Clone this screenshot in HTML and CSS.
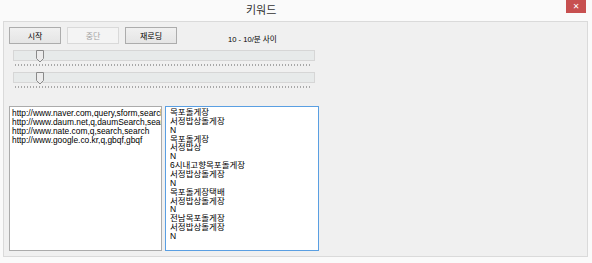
FILE: index.html
```html
<!DOCTYPE html>
<html lang="ko">
<head>
    <meta charset="UTF-8">
    <title>키워드</title>
    <link rel="stylesheet" href="styles.css">
</head>
<body>
    <div class="window">
        <div class="titlebar">
            <span class="title">키워드</span>
            <span class="close">&#x2715;</span>
        </div>
        <div class="panel">
            <div class="toolbar">
                <button class="btn">시작</button>
                <button class="btn" disabled>중단</button>
                <button class="btn">재로딩</button>
                <span class="range">10 - 10/분 사이</span>
            </div>

            <div class="slider first">
                <div class="track">
                    <svg class="thumb" width="8" height="13" viewBox="0 0 8 13"><path d="M0.5 0.5 H7.5 V8.5 L4 12 L0.5 8.5 Z" fill="#ececec" stroke="#8a8a8a"/></svg>
                </div>
                <div class="ticks"></div>
            </div>
            <div class="slider">
                <div class="track">
                    <svg class="thumb" width="8" height="13" viewBox="0 0 8 13"><path d="M0.5 0.5 H7.5 V8.5 L4 12 L0.5 8.5 Z" fill="#ececec" stroke="#8a8a8a"/></svg>
                </div>
                <div class="ticks"></div>
            </div>

            <div class="lists">
                <ul class="listbox urls">
                    <li>http://www.naver.com,query,sform,search</li>
                    <li>http://www.daum.net,q,daumSearch,search</li>
                    <li>http://www.nate.com,q,search,search</li>
                    <li>http://www.google.co.kr,q,gbqf,gbqf</li>
                </ul>
                <ul class="listbox words focused">
                    <li>목포돌게장</li>
                    <li>서정밥상돌게장</li>
                    <li>N</li>
                    <li>목포돌게장</li>
                    <li>서정밥상</li>
                    <li>N</li>
                    <li>6시내고향목포돌게장</li>
                    <li>서정밥상돌게장</li>
                    <li>N</li>
                    <li>목포돌게장택배</li>
                    <li>서정밥상돌게장</li>
                    <li>N</li>
                    <li>전남목포돌게장</li>
                    <li>서정밥상돌게장</li>
                    <li>N</li>
                </ul>
            </div>
        </div>
    </div>
</body>
</html>
```

FILE: styles.css
```css
body {
    margin: 0;
    padding: 0;
    background-color: #fafafa;
    font-family: "Liberation Sans", "Noto Sans CJK KR", sans-serif;
    color: #000;
}
.window {
    width: 592px;
    height: 263px;
    overflow: hidden;
}
.titlebar {
    height: 21px;
    display: flex;
    align-items: flex-start;
}
.title {
    margin-left: 246px;
    margin-top: 3px;
    font-family: "Noto Sans CJK KR", sans-serif;
    font-size: 11px;
    line-height: 12px;
    color: #333;
}
.close {
    margin-left: auto;
    margin-right: 6px;
    width: 20px;
    height: 13px;
    background: #c75050;
    color: #fff;
    font-size: 8px;
    line-height: 13px;
    text-align: center;
    font-family: "DejaVu Sans", sans-serif;
}
.panel {
    margin-left: 3px;
    width: 585px;
    height: 236px;
    border: 1px solid #dadada;
    background: #f0f0f0;
    padding: 5px 0 0 5px;
    box-sizing: border-box;
    display: flex;
    flex-direction: column;
}
.toolbar {
    display: flex;
    align-items: flex-start;
    gap: 6px;
    height: 17px;
}
.btn {
    width: 52px;
    height: 17px;
    padding: 0;
    border: 1px solid #acacac;
    background: linear-gradient(#f0f0f0, #e5e5e5);
    font-family: "Noto Sans CJK KR", sans-serif;
    font-size: 8px;
    line-height: 15px;
    color: #000;
}
.btn:disabled {
    border-color: #d9d9d9;
    background: #f4f4f4;
    color: #a3a3a3;
}
.range {
    margin-left: 45px;
    margin-top: 8px;
    font-family: "Liberation Sans", "Noto Sans CJK KR", sans-serif;
    font-size: 7.6px;
    line-height: 10px;
}
.slider {
    margin-left: 4px;
    width: 302px;
}
.slider.first {
    margin-top: 6px;
}
.slider + .slider {
    margin-top: 6px;
}
.track {
    position: relative;
    height: 11px;
    border: 1px solid #d6d6d6;
    background: #e7eaea;
    box-sizing: border-box;
}
.thumb {
    position: absolute;
    left: 22px;
    top: -1px;
    display: block;
}
.ticks {
    margin: 3px 3px 0 2px;
    height: 2px;
    background: repeating-linear-gradient(90deg, #a8a8a8 0 1px, transparent 1px 3px);
}
.lists {
    display: flex;
    gap: 3px;
    margin-top: 18px;
}
.listbox {
    list-style: none;
    margin: 0;
    height: 145px;
    background: #fff;
    border: 1px solid #ababab;
    box-sizing: border-box;
    overflow: hidden;
}
.urls {
    width: 153px;
    padding: 2px 1px 0 2px;
    font-size: 8.4px;
    line-height: 9px;
}
.urls li {
    white-space: nowrap;
}
.words {
    width: 154px;
    padding: 1px 2px 0 4px;
    font-family: "Liberation Sans", "Noto Sans CJK KR", sans-serif;
    font-size: 8.5px;
}
.words li {
    height: 8.86px;
    line-height: 9px;
}
.focused {
    border-color: #5a9fe2;
}
```
